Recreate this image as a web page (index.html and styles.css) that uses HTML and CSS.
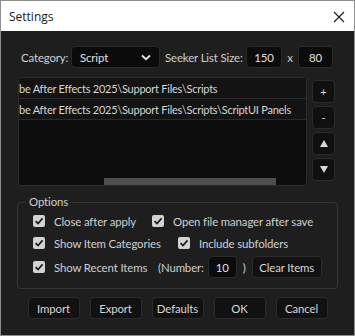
FILE: index.html
```html
<!DOCTYPE html>
<html>
<head>
<meta charset="utf-8">
<link rel="stylesheet" href="styles.css">
</head>
<body>
<div class="window">
  <div class="titlebar">
    <span class="title">Settings</span>
    <svg class="close" width="12" height="12" viewBox="0 0 12 12"><path d="M1 1 L11 11 M11 1 L1 11" stroke="#1a1a1a" stroke-width="1.1" fill="none"/></svg>
  </div>
  <div class="content">
    <div class="toprow">
      <span class="label cat">Category:</span>
      <div class="select"><span>Script</span><svg class="chev" width="10" height="7" viewBox="0 0 10 7"><path d="M1 1.5 L5 5.2 L9 1.5" stroke="#e6e6e6" stroke-width="1.8" fill="none"/></svg></div>
      <span class="label seeker">Seeker List Size:</span>
      <div class="field w36">150</div>
      <span class="times">x</span>
      <div class="field w35">80</div>
    </div>
    <div class="paths">
      <div class="list">
        <div class="item">be After Effects 2025\Support Files\Scripts</div>
        <div class="item">be After Effects 2025\Support Files\Scripts\ScriptUI Panels</div>
        <div class="empty"></div>
        <div class="hscroll"><div class="thumb"></div></div>
      </div>
      <div class="side">
        <div class="sbtn">+</div>
        <div class="sbtn">-</div>
        <div class="sbtn"><svg width="8" height="7" viewBox="0 0 8 7"><path d="M4 0 L8 7 L0 7 Z" fill="#d8d8d8"/></svg></div>
        <div class="sbtn"><svg width="8" height="7" viewBox="0 0 8 7"><path d="M0 0 L8 0 L4 7 Z" fill="#d8d8d8"/></svg></div>
      </div>
    </div>
    <fieldset class="options">
      <legend>Options</legend>
      <div class="orow">
        <span class="check c1"><span class="box"><svg width="12" height="12" viewBox="0 0 12 12"><path d="M2.6 6.2 L5 8.6 L9.6 3.4" stroke="#1b1b1b" stroke-width="1.7" fill="none"/></svg></span>Close after apply</span>
        <span class="check"><span class="box"><svg width="12" height="12" viewBox="0 0 12 12"><path d="M2.6 6.2 L5 8.6 L9.6 3.4" stroke="#1b1b1b" stroke-width="1.7" fill="none"/></svg></span>Open file manager after save</span>
      </div>
      <div class="orow">
        <span class="check c2"><span class="box"><svg width="12" height="12" viewBox="0 0 12 12"><path d="M2.6 6.2 L5 8.6 L9.6 3.4" stroke="#1b1b1b" stroke-width="1.7" fill="none"/></svg></span>Show Item Categories</span>
        <span class="check"><span class="box"><svg width="12" height="12" viewBox="0 0 12 12"><path d="M2.6 6.2 L5 8.6 L9.6 3.4" stroke="#1b1b1b" stroke-width="1.7" fill="none"/></svg></span>Include subfolders</span>
      </div>
      <div class="orow r3">
        <span class="check c3"><span class="box"><svg width="12" height="12" viewBox="0 0 12 12"><path d="M2.6 6.2 L5 8.6 L9.6 3.4" stroke="#1b1b1b" stroke-width="1.7" fill="none"/></svg></span>Show Recent Items</span>
        <span class="num">(Number:</span>
        <div class="field w29">10</div>
        <span class="paren">)</span>
        <div class="btn clear">Clear Items</div>
      </div>
    </fieldset>
    <div class="actions">
      <div class="btn act">Import</div>
      <div class="btn act">Export</div>
      <div class="btn act">Defaults</div>
      <div class="btn act">OK</div>
      <div class="btn act">Cancel</div>
    </div>
  </div>
</div>
</body>
</html>
```
FILE: styles.css
```css
html, body {
  margin: 0;
  padding: 0;
  background: #1e1e1e;
}
.window {
  width: 355px;
  height: 336px;
  box-sizing: border-box;
  border: 1px solid #8e8e8e;
  background: #1e1e1e;
  font-family: Lato, "Open Sans", sans-serif;
  font-size: 11.4px;
  letter-spacing: -0.12px;
  color: #cfcfcf;
  overflow: hidden;
}
.titlebar {
  height: 30px;
  background: #ffffff;
  display: flex;
  align-items: center;
  justify-content: space-between;
  padding: 0 9px 0 8px;
}
.title {
  font-family: "Open Sans", sans-serif;
  font-size: 12px;
  letter-spacing: 0;
  color: #1a1a1a;
}
.close {
  margin-top: 1px;
}
.content {
  padding: 15px 16px 0 16px;
}
.toprow {
  display: flex;
  align-items: center;
  height: 22px;
  padding-left: 4px;
}
.label {
  white-space: nowrap;
}
.cat {
  width: 46px;
}
.select {
  margin-left: 4px;
  width: 89px;
  height: 22px;
  box-sizing: border-box;
  background: #0b0b0b;
  border: 1px solid #2a2a2a;
  border-radius: 4px;
  display: flex;
  align-items: center;
  justify-content: space-between;
  padding: 0 8px 0 8px;
  color: #e0e0e0;
}
.seeker {
  margin-left: 5px;
  width: 76px;
}
.field {
  height: 22px;
  box-sizing: border-box;
  background: #0b0b0b;
  border: 1px solid #2a2a2a;
  border-radius: 4px;
  display: flex;
  align-items: center;
  justify-content: center;
  color: #e0e0e0;
}
.w36 { width: 36px; margin-left: 5px; }
.w35 { width: 35px; }
.w29 { width: 29px; }
.times {
  width: 16px;
  text-align: center;
}
.paths {
  display: flex;
  margin-top: 9px;
}
.list {
  margin-left: 1px;
  width: 289px;
  height: 109px;
  box-sizing: border-box;
  border: 1px solid #2c2c2c;
  border-radius: 3px;
  background: #0d0d0d;
  display: flex;
  flex-direction: column;
  overflow: hidden;
}
.item {
  height: 21px;
  box-sizing: border-box;
  border-bottom: 1px solid #2a2a2a;
  background: #131313;
  display: flex;
  align-items: center;
  white-space: nowrap;
  overflow: hidden;
  color: #d6d6d6;
  font-size: 11px;
  letter-spacing: -0.25px;
}
.empty {
  flex: 1;
}
.hscroll {
  height: 7px;
}
.thumb {
  margin-left: 85px;
  width: 172px;
  height: 7px;
  background: #4e4e4e;
}
.side {
  margin-left: 5px;
  margin-top: 3px;
  display: flex;
  flex-direction: column;
  gap: 3px;
}
.sbtn {
  width: 23px;
  height: 23px;
  box-sizing: border-box;
  background: #101010;
  border: 1px solid #2b2b2b;
  border-radius: 4px;
  display: flex;
  align-items: center;
  justify-content: center;
  color: #d8d8d8;
  font-size: 11px;
}
.options {
  margin: 8px 0 0 0;
  padding: 0 14px 10px 15px;
  border: 1px solid #363636;
  border-radius: 4px;
}
.options legend {
  padding: 0 3px;
  margin-left: -7px;
  line-height: 16px;
}
.orow {
  display: flex;
  align-items: center;
  height: 22px;
}
.orow.r3 {
  margin-top: 2px;
}
.check {
  display: flex;
  align-items: center;
  white-space: nowrap;
}
.c1 { width: 119px; }
.c2 { width: 145px; }
.c3 { width: 125px; }
.box {
  width: 12px;
  height: 12px;
  background: #d2d2d2;
  border-radius: 2px;
  margin-right: 9px;
  display: flex;
}
.num {
  margin-right: 4px;
}
.paren {
  margin: 0 6px 0 6px;
}
.btn {
  height: 22px;
  box-sizing: border-box;
  background: #111111;
  border: 1px solid #2b2b2b;
  border-radius: 4px;
  display: flex;
  align-items: center;
  justify-content: center;
  color: #d6d6d6;
  white-space: nowrap;
}
.clear {
  width: 70px;
}
.actions {
  display: flex;
  justify-content: center;
  gap: 10px;
  margin-top: 8px;
}
.act {
  width: 52px;
}
```
